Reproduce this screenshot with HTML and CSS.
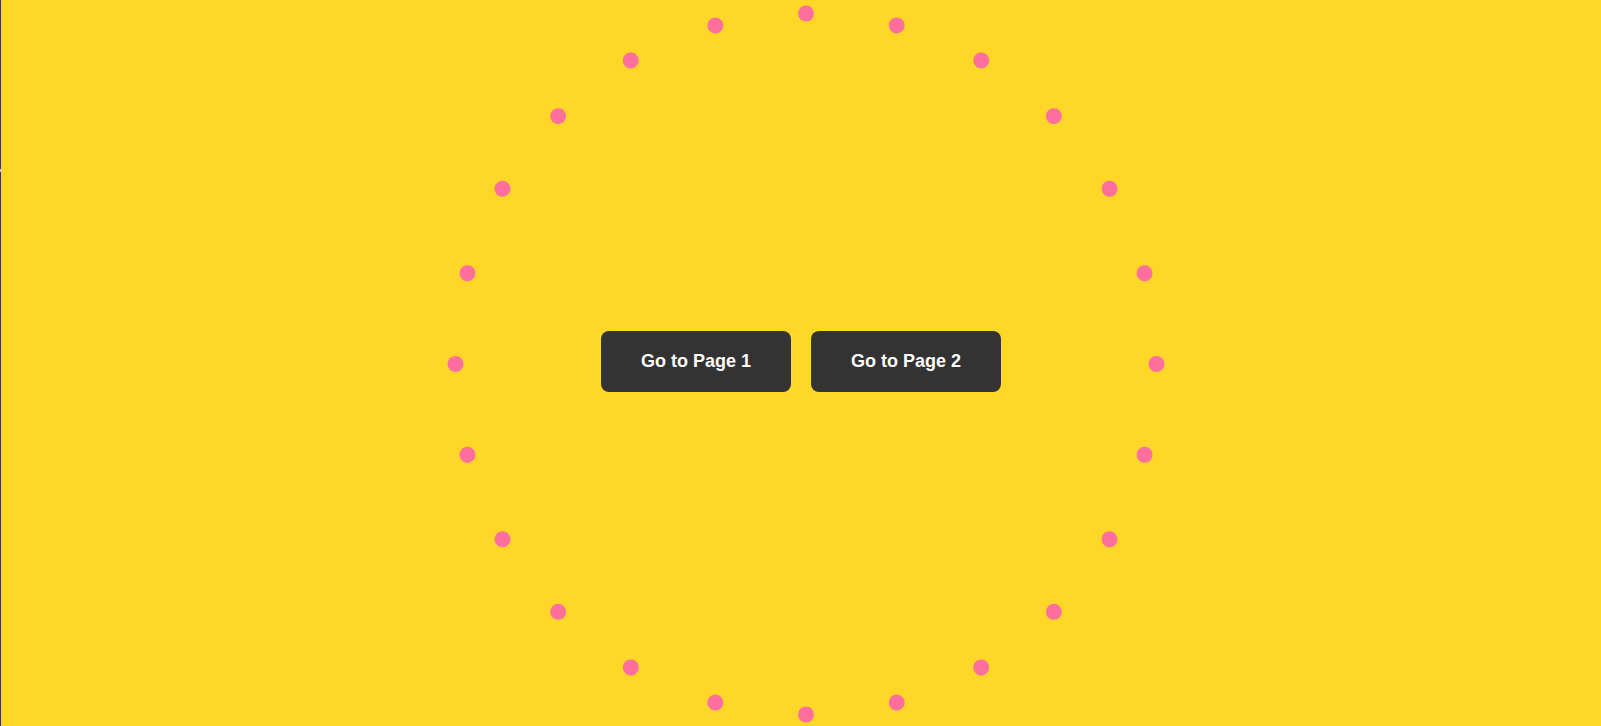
FILE: index.html
```html
<!DOCTYPE html>
<html>
<head>
<meta charset="utf-8">
<link rel="stylesheet" href="styles.css">
</head>
<body>
<div class="edge"><span class="edge-mark"></span></div>
<main class="stage">
  <div class="ring">
    <span class="dot" style="--i:0"></span>
    <span class="dot" style="--i:1"></span>
    <span class="dot" style="--i:2"></span>
    <span class="dot" style="--i:3"></span>
    <span class="dot" style="--i:4"></span>
    <span class="dot" style="--i:5"></span>
    <span class="dot" style="--i:6"></span>
    <span class="dot" style="--i:7"></span>
    <span class="dot" style="--i:8"></span>
    <span class="dot" style="--i:9"></span>
    <span class="dot" style="--i:10"></span>
    <span class="dot" style="--i:11"></span>
    <span class="dot" style="--i:12"></span>
    <span class="dot" style="--i:13"></span>
    <span class="dot" style="--i:14"></span>
    <span class="dot" style="--i:15"></span>
    <span class="dot" style="--i:16"></span>
    <span class="dot" style="--i:17"></span>
    <span class="dot" style="--i:18"></span>
    <span class="dot" style="--i:19"></span>
    <span class="dot" style="--i:20"></span>
    <span class="dot" style="--i:21"></span>
    <span class="dot" style="--i:22"></span>
    <span class="dot" style="--i:23"></span>
  </div>
  <div class="nav">
    <button class="btn">Go to Page 1</button>
    <button class="btn">Go to Page 2</button>
  </div>
</main>
</body>
</html>
```
FILE: styles.css
```css
html, body {
  margin: 0;
  padding: 0;
  height: 100%;
  overflow: hidden;
}
body {
  background: #ffd728;
  font-family: "Liberation Sans", Arial, sans-serif;
  display: flex;
}
.edge {
  width: 1px;
  flex: none;
  background: #3a3a3a;
  position: relative;
}
.edge-mark {
  position: absolute;
  left: 0;
  top: 169px;
  width: 1px;
  height: 3px;
  background: #c8c8c8;
}
.stage {
  flex: 1;
  position: relative;
  display: flex;
  align-items: center;
  justify-content: center;
  padding-bottom: 3px;
}
.ring {
  position: absolute;
  left: 804.7px;
  top: 364.3px;
  width: 0;
  height: 0;
}
.dot {
  position: absolute;
  left: -8px;
  top: -8px;
  width: 16px;
  height: 16px;
  border-radius: 50%;
  background: #ff6f9e;
  transform: rotate(calc(var(--i) * 15deg)) translateY(-350.5px);
}
.nav {
  display: flex;
  gap: 20px;
  position: relative;
}
.btn {
  width: 190px;
  height: 61px;
  border: 0;
  border-radius: 8px;
  background: #333333;
  color: #ffffff;
  font-family: "Liberation Sans", Arial, sans-serif;
  font-weight: bold;
  font-size: 18px;
  padding: 0;
  cursor: pointer;
}
```
